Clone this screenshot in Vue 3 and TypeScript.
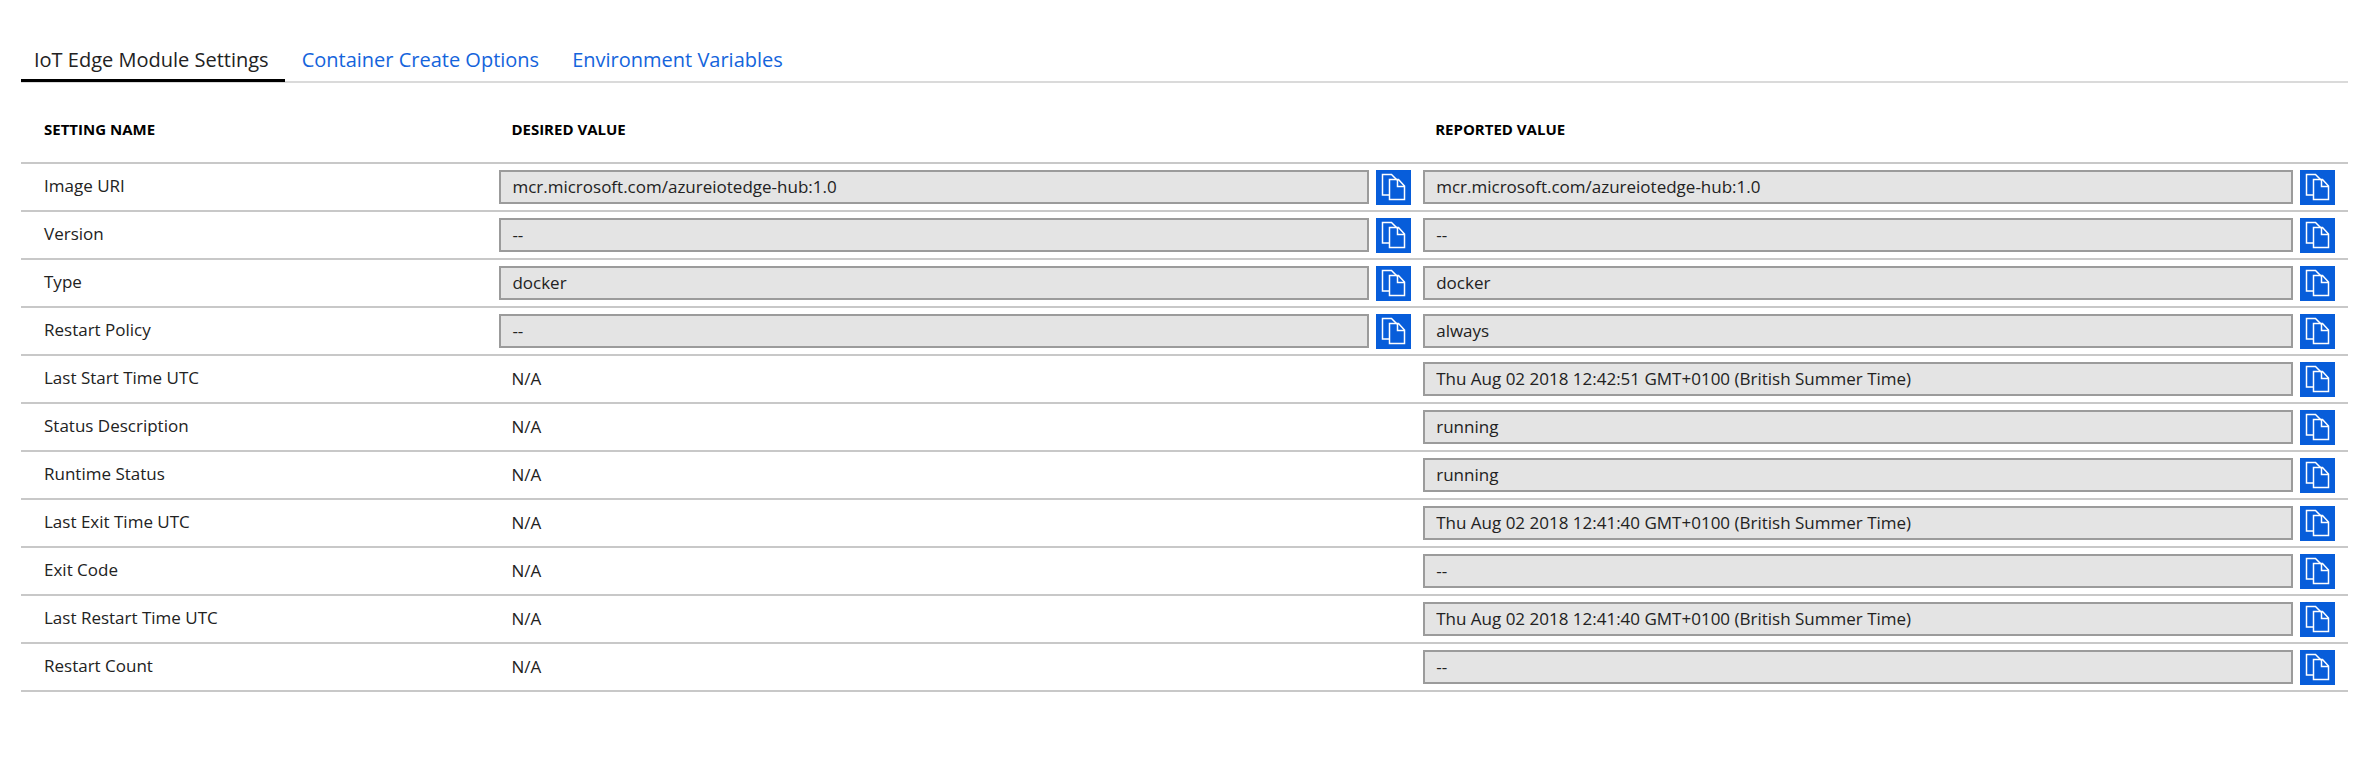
<script setup lang="ts">
import { ref } from 'vue'

interface Setting {
  name: string
  desired: string | null
  reported: string
}

const tabs: string[] = ['IoT Edge Module Settings', 'Container Create Options', 'Environment Variables']
const activeTab = ref(0)

const settings: Setting[] = [
  { name: 'Image URI', desired: 'mcr.microsoft.com/azureiotedge-hub:1.0', reported: 'mcr.microsoft.com/azureiotedge-hub:1.0' },
  { name: 'Version', desired: '--', reported: '--' },
  { name: 'Type', desired: 'docker', reported: 'docker' },
  { name: 'Restart Policy', desired: '--', reported: 'always' },
  { name: 'Last Start Time UTC', desired: null, reported: 'Thu Aug 02 2018 12:42:51 GMT+0100 (British Summer Time)' },
  { name: 'Status Description', desired: null, reported: 'running' },
  { name: 'Runtime Status', desired: null, reported: 'running' },
  { name: 'Last Exit Time UTC', desired: null, reported: 'Thu Aug 02 2018 12:41:40 GMT+0100 (British Summer Time)' },
  { name: 'Exit Code', desired: null, reported: '--' },
  { name: 'Last Restart Time UTC', desired: null, reported: 'Thu Aug 02 2018 12:41:40 GMT+0100 (British Summer Time)' },
  { name: 'Restart Count', desired: null, reported: '--' },
]

const columns = ['desired', 'reported'] as const

function copy(text: string) {
  navigator.clipboard?.writeText(text)
}
</script>

<template>
  <main class="page">
    <div class="tabs" role="tablist">
      <button
        v-for="(tab, i) in tabs"
        :key="tab"
        type="button"
        role="tab"
        class="tab"
        :class="{ active: i === activeTab }"
        :aria-selected="i === activeTab"
        @click="activeTab = i"
      >{{ tab }}</button>
    </div>

    <table class="settings">
      <thead>
        <tr>
          <th scope="col" class="name">SETTING NAME</th>
          <th scope="col" class="desired">DESIRED VALUE</th>
          <th scope="col" class="reported">REPORTED VALUE</th>
        </tr>
      </thead>
      <tbody>
        <tr v-for="(s, i) in settings" :key="s.name">
          <th scope="row" class="name">{{ s.name }}</th>
          <td v-for="col in columns" :key="col" :class="col">
            <div v-if="s[col] !== null" class="field">
              <input :id="`${col}-${i}`" type="text" readonly :value="s[col]" :aria-label="`${s.name}, ${col} value`" />
              <button type="button" class="copy" :aria-label="`Copy ${s.name}, ${col} value`" @click="copy(s[col] ?? '')">
                <svg viewBox="0 0 35 35" aria-hidden="true">
                  <path d="M13 25H6.5V4.5H15.5L21 10" />
                  <path d="M13.5 9.5H22.5L28.5 16V29.5H13.5ZM21.5 9.5V16.5H28.5" />
                </svg>
              </button>
            </div>
            <span v-else class="empty">N/A</span>
          </td>
        </tr>
      </tbody>
    </table>
  </main>
</template>

<style>
body {
  margin: 0;
  background: #fff;
}
</style>

<style scoped>
.page {
  padding: 40px 21px;
  font-family: 'Segoe UI', 'Open Sans', 'Noto Sans', sans-serif;
  font-size: 17px;
  line-height: 24px;
  color: #222;
}

button,
input {
  font: inherit;
  box-sizing: border-box;
  margin: 0;
  border-radius: 0;
}

.tabs {
  display: flex;
  gap: 4px;
  border-bottom: 2px solid #dadada;
}

.tab {
  padding: 6px 16px 5px 13px;
  margin-bottom: -1px;
  border: 0;
  border-bottom: 3px solid transparent;
  background: none;
  font-size: 20px;
  line-height: 28px;
  color: #1464dc;
  cursor: pointer;
}

.tab.active {
  border-bottom-color: #000;
  color: #222;
}

.settings {
  width: 100%;
  table-layout: fixed;
  border-collapse: separate;
  border-spacing: 0;
}

th,
td {
  box-sizing: border-box;
  height: 48px;
  padding: 6px 0 5px;
  border-bottom: 2px solid #c8c8c8;
  text-align: left;
  vertical-align: middle;
  font-weight: 400;
}

tbody th {
  padding: 4px 0 6px;
}

.name {
  width: 20%;
  padding-left: 23px;
}

.desired {
  width: 40%;
  padding-left: 13px;
  padding-right: 6px;
}

.reported {
  width: 40%;
  padding-left: 6px;
  padding-right: 13px;
}

thead th {
  height: 81px;
  padding-top: 18px;
  font-size: 15px;
  font-weight: 700;
  line-height: 20px;
  color: #000;
}

thead .desired {
  padding-left: 25px;
}

thead .reported {
  padding-left: 18px;
}

.field {
  display: flex;
  align-items: flex-start;
  gap: 7px;
}

input {
  flex: 1;
  min-width: 0;
  height: 34px;
  padding: 0 11px 2px;
  border: 2px solid #9b9b9b;
  background: #e4e4e4;
  color: #222;
  outline: 0;
}

.copy {
  flex: none;
  width: 35px;
  height: 35px;
  padding: 0;
  border: 0;
  background: #075dda;
  cursor: pointer;
}

.copy svg {
  display: block;
  width: 100%;
  height: 100%;
  fill: none;
  stroke: #fff;
  stroke-width: 1.5;
}

.empty {
  display: block;
  padding: 0 12px 2px;
}
</style>
